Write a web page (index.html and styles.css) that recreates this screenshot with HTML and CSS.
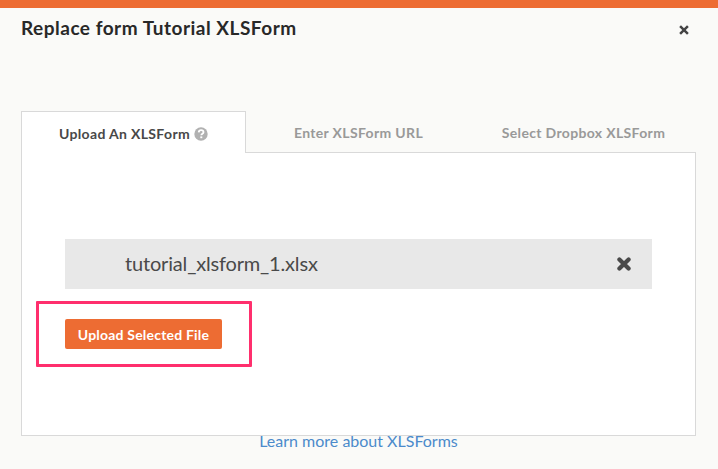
FILE: index.html
```html
<!DOCTYPE html>
<html lang="en">
<head>
<meta charset="utf-8">
<title>Replace form Tutorial XLSForm</title>
<link rel="stylesheet" href="styles.css">
</head>
<body>
<main class="modal">
  <header class="header">
    <h1 class="title">Replace form Tutorial XLSForm</h1>
    <button class="close" aria-label="Close"><svg width="10" height="10" viewBox="0 0 10 10"><path d="M1.1 1.1 8.9 8.9M8.9 1.1 1.1 8.9" stroke="currentColor" stroke-width="2.5"/></svg></button>
  </header>
  <nav class="tabs">
    <a class="tab active"><span>Upload An XLSForm</span><svg class="help" width="14" height="14" viewBox="0 0 14 14"><circle cx="7" cy="7" r="6.7" fill="#b1b1b1"/><path d="M4.7 5.3C4.9 3.9 5.8 3.2 7.1 3.2c1.4 0 2.4.8 2.4 2 0 1.6-2.2 1.5-2.2 3.1" fill="none" stroke="#fff" stroke-width="1.8"/><path d="M6.3 9.4h2v1.8h-2z" fill="#fff"/></svg></a>
    <a class="tab"><span>Enter XLSForm URL</span></a>
    <a class="tab"><span>Select Dropbox XLSForm</span></a>
  </nav>
  <section class="panel">
    <div class="file">
      <span class="file-name">tutorial_xlsform_1.xlsx</span>
      <button class="remove" aria-label="Remove file"><svg width="14" height="14" viewBox="0 0 14 14"><path d="M2.4 2.4 11.6 11.6M11.6 2.4 2.4 11.6" stroke="currentColor" stroke-width="4.2" stroke-linecap="round"/></svg></button>
    </div>
    <div class="highlight"><button class="upload">Upload Selected File</button></div>
  </section>
  <footer class="footer"><a class="learn">Learn more about XLSForms</a></footer>
</main>
</body>
</html>
```
FILE: styles.css
```css
* { box-sizing: border-box; }
body { margin: 0; background: #fafaf8; font-family: Lato, "Liberation Sans", sans-serif; color: #4a4a4a; }
button { border: 0; padding: 0; background: none; font: inherit; color: inherit; white-space: nowrap; }
svg { display: block; }
span, a { white-space: nowrap; }
.modal { height: 469px; border-top: 8px solid #ed6c33; padding: 0 22px 0 21px; overflow: hidden; }
.header { display: flex; justify-content: space-between; align-items: flex-start; height: 103px; padding-top: 8px; }
.title { margin: 0; font-size: 19px; line-height: 24px; font-weight: 700; letter-spacing: 0.5px; color: #282828; }
.close { margin: 9px 7px 0 0; color: #444; }
.tabs { display: grid; grid-template-columns: repeat(3, 225px); height: 42px; }
.tab { display: flex; align-items: center; justify-content: center; border-bottom: 1px solid #d9d9d9; padding-top: 3px; font-size: 14px; line-height: 20px; font-weight: 700; letter-spacing: 0.34px; color: #999; }
.tab.active { border: 1px solid #d9d9d9; border-bottom: 0; background: #fff; color: #484848; }
.help { margin-left: 4px; margin-top: -1px; }
.panel { height: 283px; border: 1px solid #d9d9d9; border-top: 0; background: #fff; padding: 86px 43px 0; }
.file { display: flex; align-items: center; justify-content: space-between; height: 50px; background: #e8e8e8; padding: 0 21px 0 60px; }
.file-name { font-size: 20px; line-height: 28px; letter-spacing: -0.17px; padding-bottom: 2px; }
.highlight { width: 216px; height: 66px; margin: 12px 0 0 -29px; border: 3px solid #ff2f6d; padding: 15px 0 0 26px; border-radius: 1px; }
.upload { display: flex; align-items: center; justify-content: center; width: 157px; height: 30px; border-radius: 2px; background: #ed6c33; color: #fff; font-size: 14px; font-weight: 700; letter-spacing: 0.2px; }
.footer { display: flex; justify-content: center; }
.learn { font-size: 16px; line-height: 20px; margin-top: -5px; color: #4b8acb; }
```
